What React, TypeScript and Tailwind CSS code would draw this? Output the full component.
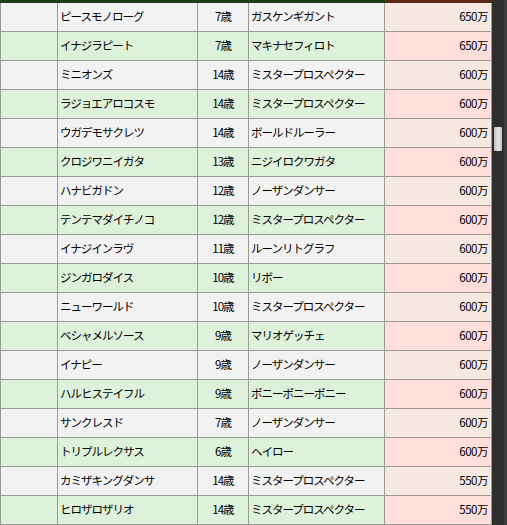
const rows = [
	["ピースモノローグ", "7歳", "ガスケンギガント", "650万"],
	["イナジラピート", "7歳", "マキナセフィロト", "650万"],
	["ミニオンズ", "14歳", "ミスタープロスペクター", "600万"],
	["ラジョエアロコスモ", "14歳", "ミスタープロスペクター", "600万"],
	["ウガデモサクレツ", "14歳", "ボールドルーラー", "600万"],
	["クロジワニイガタ", "13歳", "ニジイロクワガタ", "600万"],
	["ハナビガドン", "12歳", "ノーザンダンサー", "600万"],
	["テンテマダイチノコ", "12歳", "ミスタープロスペクター", "600万"],
	["イナジインラヴ", "11歳", "ルーンリトグラフ", "600万"],
	["ジンガロダイス", "10歳", "リボー", "600万"],
	["ニューワールド", "10歳", "ミスタープロスペクター", "600万"],
	["ベシャメルソース", "9歳", "マリオゲッチェ", "600万"],
	["イナピー", "9歳", "ノーザンダンサー", "600万"],
	["ハルヒステイフル", "9歳", "ポニーポニーポニー", "600万"],
	["サンクレスド", "7歳", "ノーザンダンサー", "600万"],
	["トリプルレクサス", "6歳", "ヘイロー", "600万"],
	["カミザキングダンサ", "14歳", "ミスタープロスペクター", "550万"],
	["ヒロザロザリオ", "14歳", "ミスタープロスペクター", "550万"]
]

export default function App() {
	return (
		<div
			className="flex w-[507px] h-[525px] overflow-hidden bg-[#f0f0f0] text-[11.5px] text-black"
			style={{ fontFamily: '"Noto Sans CJK JP", "Noto Sans", sans-serif' }}
		>
			<div className="w-[492px] flex flex-col">
				{/* header strip, mostly scrolled out of view */}
				<div className="flex h-[3px] shrink-0">
					<div className="w-[385px] bg-[#1d3e12]" />
					<div className="flex-1 bg-[#5a2814]" />
				</div>
				{rows.map(([name, age, sire, prize], i) => {
					const green = i % 2 === 1
					return (
						<div
							key={name}
							className={`flex h-[29px] shrink-0 border-b border-[#9a9a9a] ${green ? "bg-[#ddf1db]" : "bg-[#f2f2f2]"}`}
						>
							<div className="w-[58px] border-l border-r border-[#9a9a9a]" />
							<div className="w-[140px] border-r border-[#9a9a9a] flex items-center pl-[2px] tracking-[-1px]">
								{name}
							</div>
							<div className="w-[51px] border-r border-[#9a9a9a] flex items-center justify-center tracking-[-1px]">
								{age}
							</div>
							<div className="w-[136px] border-r border-[#9a9a9a] flex items-center pl-[2px] tracking-[-1px]">
								{sire}
							</div>
							<div
								className={`flex-1 border-r border-[#9a9a9a] flex items-center justify-end pr-[3px] tracking-[-0.5px] ${green ? "bg-[#ffdedb]" : "bg-[#f7e9e1]"}`}
							>
								{prize}
							</div>
						</div>
					)
				})}
			</div>
			{/* scrollbar */}
			<div className="w-[15px] h-full flex bg-[#2e2e2e]">
				<div className="w-[12px] pt-[127px] pl-[2px]">
					<div className="w-[8px] h-[24px] rounded-[1px] bg-gradient-to-r from-[#bdbdbd] via-[#e4e4e4] to-[#c4c4c4]" />
				</div>
				<div className="flex-1 bg-[#3c3c3c]" />
			</div>
		</div>
	)
}
